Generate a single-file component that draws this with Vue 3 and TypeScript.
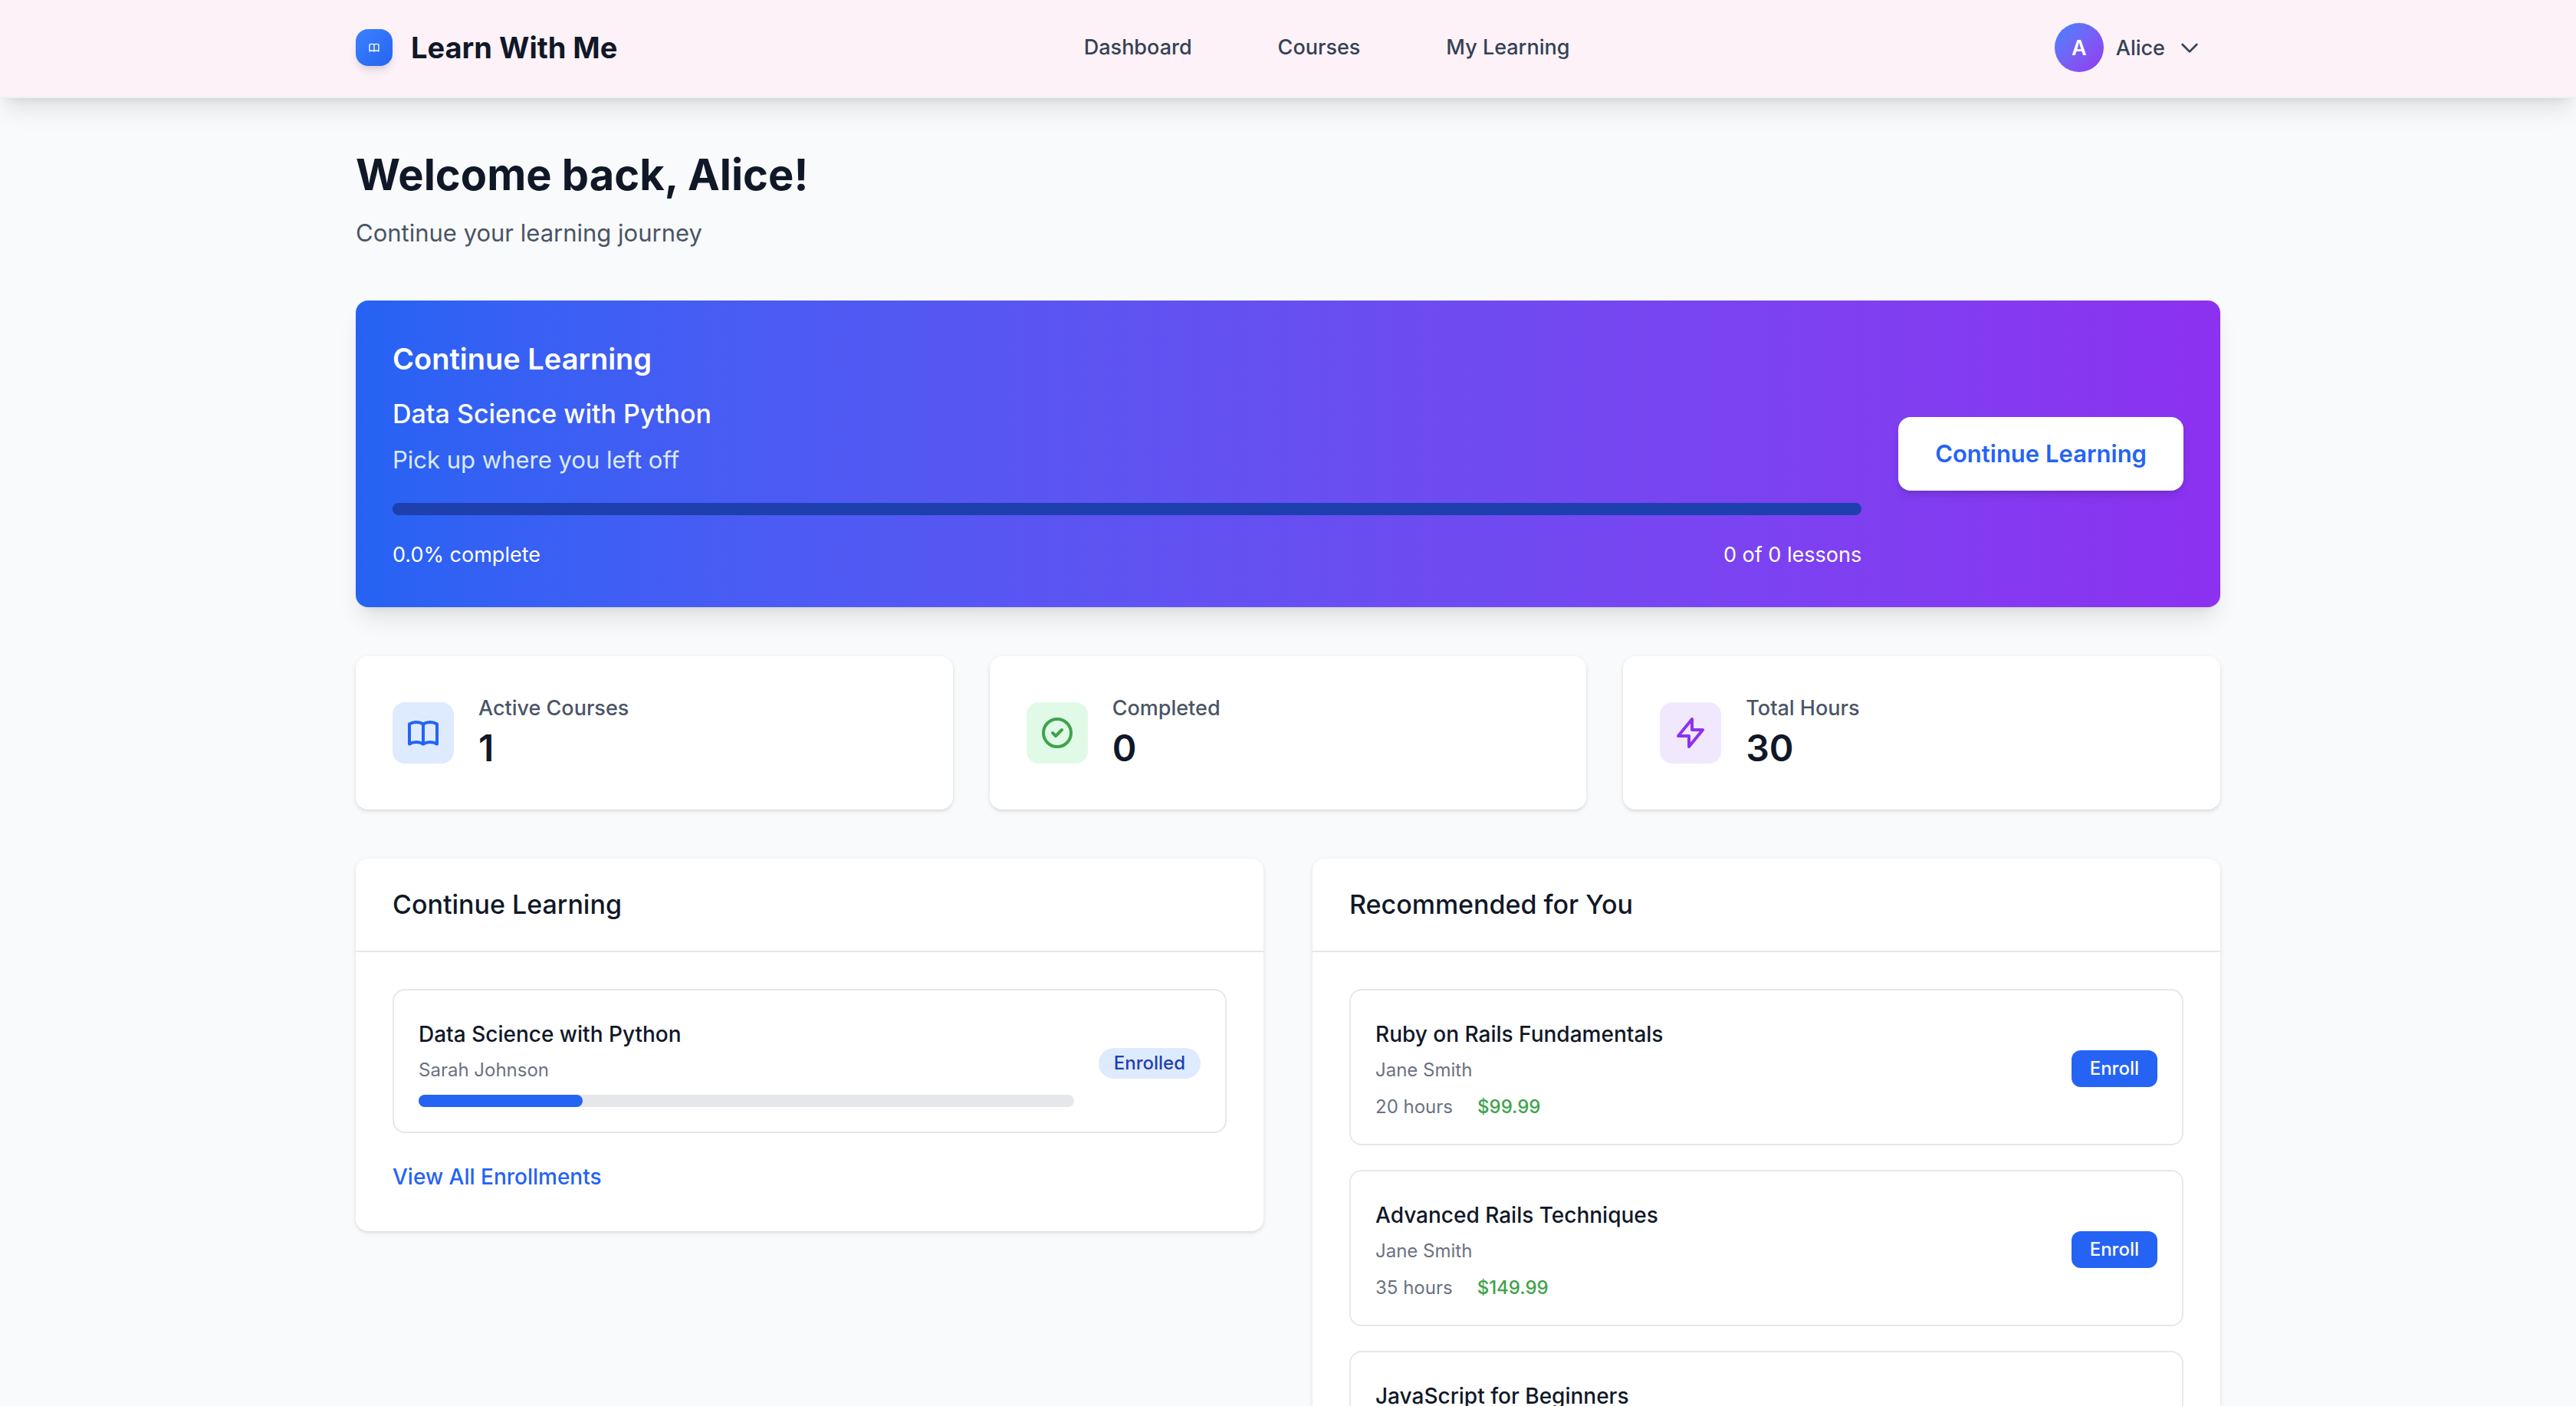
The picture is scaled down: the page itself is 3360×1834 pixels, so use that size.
<script setup lang="ts">
interface Course {
  title: string
  author?: string
  duration?: string
  price?: string
}

interface Stat {
  label: string
  value: string
  tone: string
  path: string
}

const bookPath =
  'M12 6.253v13m0-13C10.832 5.477 9.246 5 7.5 5S4.168 5.477 3 6.253v13C4.168 18.477 5.754 18 7.5 18s3.332.477 4.5 1.253m0-13C13.168 5.477 14.754 5 16.5 5c1.747 0 3.332.477 4.5 1.253v13C19.832 18.477 18.247 18 16.5 18c-1.746 0-3.332.477-4.5 1.253'

const links: string[] = ['Dashboard', 'Courses', 'My Learning']

const stats: Stat[] = [
  { label: 'Active Courses', value: '1', tone: 'blue', path: bookPath },
  { label: 'Completed', value: '0', tone: 'green', path: 'M9 12l2 2 4-4m6 2a9 9 0 11-18 0 9 9 0 0118 0z' },
  { label: 'Total Hours', value: '30', tone: 'purple', path: 'M13 10V3L4 14h7v7l9-11h-7z' },
]

const current = { title: 'Data Science with Python', author: 'Sarah Johnson', progress: 25 }

const recommended: Course[] = [
  { title: 'Ruby on Rails Fundamentals', author: 'Jane Smith', duration: '20 hours', price: '$99.99' },
  { title: 'Advanced Rails Techniques', author: 'Jane Smith', duration: '35 hours', price: '$149.99' },
  { title: 'JavaScript for Beginners' },
]
</script>

<template>
  <div class="page">
    <header class="topbar">
      <div class="container topbar-inner">
        <a class="brand" href="#">
          <span class="brand-mark">
            <svg viewBox="0 0 24 24" aria-hidden="true"><path :d="bookPath" /></svg>
          </span>
          <span class="brand-name">Learn With Me</span>
        </a>
        <nav class="nav">
          <a v-for="link in links" :key="link" href="#" class="nav-link">{{ link }}</a>
        </nav>
        <button type="button" class="user">
          <span class="avatar">A</span>
          <span>Alice</span>
          <svg viewBox="0 0 24 24" aria-hidden="true"><path d="M19 9l-7 7-7-7" /></svg>
        </button>
      </div>
    </header>

    <main class="container main">
      <section class="intro">
        <h1>Welcome back, Alice!</h1>
        <p>Continue your learning journey</p>
      </section>

      <section class="hero">
        <div class="hero-body">
          <h2>Continue Learning</h2>
          <h3>{{ current.title }}</h3>
          <p class="hero-note">Pick up where you left off</p>
          <div class="hero-track"></div>
          <div class="hero-meta">
            <span>0.0% complete</span>
            <span>0 of 0 lessons</span>
          </div>
        </div>
        <button type="button" class="hero-button">Continue Learning</button>
      </section>

      <section class="stats">
        <article v-for="stat in stats" :key="stat.label" class="card stat">
          <span class="tile" :class="stat.tone">
            <svg viewBox="0 0 24 24" aria-hidden="true"><path :d="stat.path" /></svg>
          </span>
          <div>
            <p class="stat-label">{{ stat.label }}</p>
            <p class="stat-value">{{ stat.value }}</p>
          </div>
        </article>
      </section>

      <div class="panels">
        <section class="card">
          <h2 class="panel-title">Continue Learning</h2>
          <div class="panel-body">
            <article class="item">
              <div class="item-body">
                <h4><a href="#">{{ current.title }}</a></h4>
                <p class="muted">{{ current.author }}</p>
                <div class="track">
                  <div class="fill" :style="{ width: current.progress + '%' }"></div>
                </div>
              </div>
              <div><span class="badge">Enrolled</span></div>
            </article>
            <div><a href="#" class="view-all">View All Enrollments</a></div>
          </div>
        </section>

        <section class="card">
          <h2 class="panel-title">Recommended for You</h2>
          <div class="panel-body">
            <article v-for="course in recommended" :key="course.title" class="item">
              <div class="item-body">
                <h4><a href="#">{{ course.title }}</a></h4>
                <p v-if="course.author" class="muted">{{ course.author }}</p>
                <p v-if="course.price" class="muted facts">
                  <span>{{ course.duration }}</span>
                  <span class="price">{{ course.price }}</span>
                </p>
              </div>
              <div v-if="course.price"><button type="button" class="enroll">Enroll</button></div>
            </article>
          </div>
        </section>
      </div>
    </main>
  </div>
</template>

<style>
body {
  margin: 0;
  background: #f9fafb;
}
</style>

<style scoped>
.page {
  height: 100vh;
  overflow: hidden;
  background: #f9fafb;
  color: #101828;
  font-family: Inter, "Liberation Sans", sans-serif;
  font-size: 31px;
  line-height: 48px;
}

.page * {
  box-sizing: border-box;
}

h1, h2, h3, h4, p {
  margin: 0;
}

a {
  color: inherit;
  text-decoration: none;
}

button {
  border: 0;
  font-family: inherit;
  cursor: pointer;
}

svg {
  display: block;
  fill: none;
  stroke: currentColor;
  stroke-width: 2;
  stroke-linecap: round;
  stroke-linejoin: round;
}

.container {
  max-width: 2560px;
  margin: 0 auto;
  padding: 0 64px;
}

.topbar {
  background: #fcf2f8;
  border-bottom: 2px solid #eff1f4;
  box-shadow: 0 20px 30px -6px rgba(0, 0, 0, 0.1), 0 8px 12px -8px rgba(0, 0, 0, 0.1);
}

.topbar-inner {
  display: flex;
  align-items: center;
  justify-content: space-between;
  padding-top: 30px;
  padding-bottom: 32px;
}

.brand {
  display: flex;
  align-items: center;
  gap: 24px;
}

.brand-mark {
  display: grid;
  place-items: center;
  width: 48px;
  height: 48px;
  border-radius: 16px;
  color: #fff;
  background: linear-gradient(135deg in oklab, #3b82ff, #2563f0);
  box-shadow: 0 8px 12px -2px rgba(0, 0, 0, 0.1), 0 4px 8px -4px rgba(0, 0, 0, 0.1);
}

.brand-mark svg {
  width: 16px;
  height: 16px;
}

.brand-name {
  font-size: 38px;
  font-weight: 700;
}

.nav {
  display: flex;
  gap: 64px;
}

.nav-link {
  padding: 0 24px;
  font-size: 27px;
  font-weight: 500;
  color: #364153;
}

.user {
  display: flex;
  align-items: center;
  gap: 16px;
  padding: 0 24px;
  background: none;
  color: #364153;
  font-size: 27px;
  font-weight: 500;
}

.user svg {
  width: 32px;
  height: 32px;
}

.avatar {
  display: grid;
  place-items: center;
  width: 64px;
  height: 64px;
  border-radius: 50%;
  color: #fff;
  font-weight: 600;
  background: linear-gradient(135deg in oklab, #3b82ff, #9333ee);
}

.main {
  padding-top: 64px;
}

h1 {
  font-size: 56px;
  line-height: 72px;
  font-weight: 700;
}

.intro p {
  margin-top: 16px;
  color: #4a5565;
}

.hero {
  display: flex;
  align-items: center;
  gap: 48px;
  margin-top: 64px;
  padding: 48px;
  border-radius: 16px;
  color: #fff;
  background: linear-gradient(90deg in oklab, #2563f4, #8c31f0);
  box-shadow: 0 20px 30px -6px rgba(0, 0, 0, 0.1), 0 8px 12px -8px rgba(0, 0, 0, 0.1);
}

.hero-body {
  flex: 1;
}

.hero h2 {
  font-size: 38px;
  line-height: 56px;
  font-weight: 600;
}

.hero h3 {
  margin-top: 16px;
  font-size: 34px;
  line-height: 56px;
  font-weight: 500;
}

.hero-note {
  margin-top: 8px;
  color: #dbeafe;
}

.hero-track {
  height: 16px;
  margin-top: 32px;
  border-radius: 8px;
  background: #1e40af;
}

.hero-meta {
  display: flex;
  justify-content: space-between;
  margin-top: 32px;
  font-size: 27px;
  line-height: 40px;
}

.hero-button {
  padding: 24px 48px;
  border-radius: 16px;
  background: #fff;
  color: #2563f4;
  font-size: 31px;
  line-height: 48px;
  font-weight: 600;
  box-shadow: 0 8px 12px -2px rgba(0, 0, 0, 0.1), 0 4px 8px -4px rgba(0, 0, 0, 0.1);
}

.card {
  border-radius: 16px;
  background: #fff;
  box-shadow: 0 2px 6px rgba(0, 0, 0, 0.1), 0 2px 4px -2px rgba(0, 0, 0, 0.1);
}

.stats {
  display: grid;
  grid-template-columns: repeat(3, 1fr);
  gap: 48px;
  margin-top: 64px;
}

.stat {
  display: flex;
  align-items: center;
  gap: 32px;
  padding: 48px;
}

.tile {
  display: grid;
  place-items: center;
  width: 80px;
  height: 80px;
  border-radius: 16px;
}

.tile svg {
  width: 48px;
  height: 48px;
}

.blue {
  background: #deeafe;
  color: #2563f4;
}

.green {
  background: #e1fae8;
  color: #3fa34a;
}

.purple {
  background: #f1e8fe;
  color: #8c31f0;
}

.stat-label {
  font-size: 27px;
  line-height: 40px;
  font-weight: 500;
  color: #4a5565;
}

.stat-value {
  font-size: 48px;
  line-height: 64px;
  font-weight: 600;
}

.panels {
  display: grid;
  grid-template-columns: repeat(2, 1fr);
  align-items: start;
  gap: 64px;
  margin-top: 64px;
}

.panel-title {
  padding: 32px 48px;
  border-bottom: 2px solid #e5e7eb;
  font-size: 34px;
  line-height: 56px;
  font-weight: 500;
}

.panel-body {
  display: flex;
  flex-direction: column;
  gap: 32px;
  padding: 48px;
}

.item {
  display: flex;
  align-items: center;
  gap: 32px;
  padding: 32px;
  border: 2px solid #e5e7eb;
  border-radius: 16px;
}

.item-body {
  flex: 1;
}

.item h4 {
  margin-bottom: 8px;
  font-size: 31px;
}

.item h4 a,
.view-all {
  font-size: 28px;
  line-height: 40px;
  font-weight: 500;
}

.view-all {
  color: #2563f4;
}

.muted {
  font-size: 24px;
  line-height: 32px;
  color: #6a7282;
}

.facts {
  display: flex;
  gap: 32px;
  margin-top: 16px;
}

.price {
  font-weight: 500;
  color: #3fa34a;
}

.track {
  height: 16px;
  margin-top: 16px;
  border-radius: 8px;
  background: #e5e7eb;
}

.fill {
  height: 100%;
  border-radius: 8px;
  background: #2563f4;
}

.badge {
  display: inline-flex;
  padding: 4px 20px;
  border-radius: 20px;
  background: #deeafe;
  color: #1e40af;
  font-size: 24px;
  line-height: 32px;
  font-weight: 500;
}

.enroll {
  padding: 8px 24px;
  border-radius: 12px;
  background: #2563f4;
  color: #fff;
  font-size: 24px;
  line-height: 32px;
  font-weight: 500;
}
</style>
